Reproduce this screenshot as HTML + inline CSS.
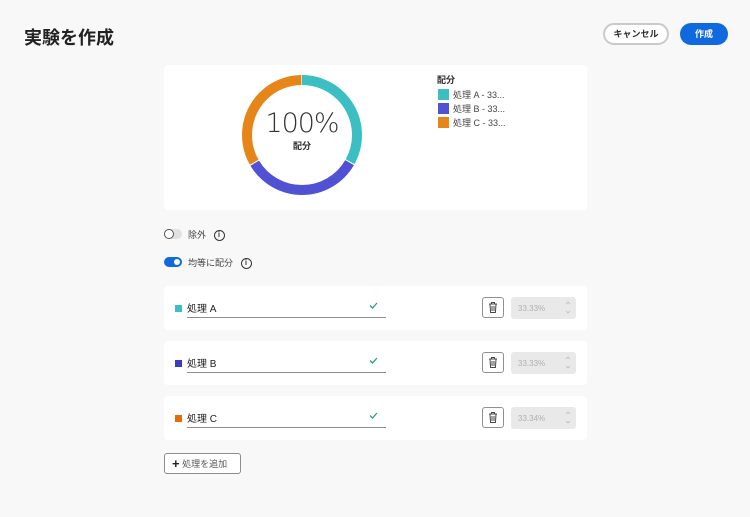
<!DOCTYPE html>
<html><head><meta charset="utf-8"><style>
*{box-sizing:border-box;margin:0;padding:0}
body{width:750px;height:517px;background:#f8f8f8;font-family:"Liberation Sans","Noto Sans CJK JP",sans-serif;color:#2c2c2c;position:relative;overflow:hidden}
.abs{position:absolute}
.card{position:absolute;left:164px;width:423px;background:#fff;border-radius:4px}
.row{height:44px}
.sq{position:absolute;left:11px;top:19px;width:7px;height:7px}
.lbl{position:absolute;left:23px;top:14px;font-size:10px;color:#222}
.line{position:absolute;left:23px;top:31px;width:199px;height:1px;background:#8e8e8e}
.chk{position:absolute;left:205px;top:16px}
.del{position:absolute;left:318px;top:11px;width:22px;height:21px;border:1px solid #909090;border-radius:3px;background:#fff}
.num{position:absolute;left:347px;top:11px;width:65px;height:22px;background:#e9e9e9;border-radius:3px;font-size:8px;color:#b0b0b0;padding:7px 0 0 7px}
.num svg{position:absolute;right:5px;top:3px}
.info{display:inline-block;width:11px;height:11px;border:1.5px solid #333;border-radius:50%;font-size:8px;text-align:center;line-height:8px;font-weight:bold;vertical-align:middle}
</style></head><body>
<div class="abs" style="left:24px;top:24px;font-size:18px;font-weight:bold;color:#222">実験を作成</div>
<div class="abs" style="left:603px;top:23px;width:66px;height:22px;border:2px solid #cacaca;border-radius:11px;font-size:9px;font-weight:bold;text-align:center;line-height:18px;background:#fff">キャンセル</div>
<div class="abs" style="left:680px;top:23px;width:48px;height:22px;background:#1169e0;border-radius:11px;color:#fff;font-size:9px;font-weight:bold;text-align:center;line-height:22px">作成</div>

<div class="card" style="top:65px;height:145px">
<svg class="abs" style="left:77px;top:9px" width="122" height="122" viewBox="0 0 122 122">
<g fill="none" stroke-width="10" transform="rotate(-90 61 61)">
<circle cx="61" cy="61" r="55" stroke="#3bbfc3" stroke-dasharray="114.2 231.4"/>
<circle cx="61" cy="61" r="55" stroke="#5151d3" stroke-dasharray="0 115.2 114.2 231.4"/>
<circle cx="61" cy="61" r="55" stroke="#e68619" stroke-dasharray="0 230.4 114.2 231.4"/>
</g></svg>
<div class="abs" style="left:98px;top:43px;width:80px;text-align:center;font-size:27px;color:#333;font-family:'DejaVu Sans',sans-serif;font-weight:200;letter-spacing:-1px">100%</div>
<div class="abs" style="left:98px;top:74px;width:80px;text-align:center;font-size:9px;font-weight:bold">配分</div>
<div class="abs" style="left:273px;top:8px;font-size:9px;font-weight:bold">配分</div>
<div class="abs" style="left:274px;top:23px;font-size:9px;color:#444;line-height:14px">
<div><span style="display:inline-block;width:11px;height:11px;background:#3bbfc3;vertical-align:-2px;margin-right:4px"></span>処理 A - 33...</div>
<div><span style="display:inline-block;width:11px;height:11px;background:#5151d3;vertical-align:-2px;margin-right:4px"></span>処理 B - 33...</div>
<div><span style="display:inline-block;width:11px;height:11px;background:#e68619;vertical-align:-2px;margin-right:4px"></span>処理 C - 33...</div>
</div></div>

<div class="abs" style="left:164px;top:229px;width:18px;height:10px;border-radius:5px;background:#e1e1e1"></div>
<div class="abs" style="left:164px;top:229px;width:10px;height:10px;border-radius:50%;border:1.5px solid #555;background:#fff"></div>
<div class="abs" style="left:188px;top:228px;font-size:9px;color:#444">除外 <span class="info" style="margin-left:5px">i</span></div>
<div class="abs" style="left:164px;top:257px;width:18px;height:10px;border-radius:5px;background:#1169e0"></div>
<div class="abs" style="left:174px;top:259px;width:6px;height:6px;border-radius:50%;background:#fff"></div>
<div class="abs" style="left:188px;top:256px;font-size:9px;color:#444">均等に配分 <span class="info" style="margin-left:5px">i</span></div>

<div class="card row" style="top:286px"><div class="sq" style="background:#3bbfc3"></div><div class="lbl">処理 A</div><svg class="chk" width="9" height="7" viewBox="0 0 9 7"><path d="M1 3.5l2.5 2.5L8 1" fill="none" stroke="#2d9d78" stroke-width="1.3"/></svg><div class="line"></div><div class="del"><svg width="20" height="19" viewBox="0 0 20 19"><path d="M6 6h8M8.5 6V4.5h3V6M7 6.5l.6 8h4.8l.6-8M9 8v5M11 8v5" fill="none" stroke="#444" stroke-width="1"/></svg></div><div class="num">33.33%<svg width="6" height="15" viewBox="0 0 6 15"><path d="M1 4l2-2 2 2M1 11l2 2 2-2" fill="none" stroke="#bbb" stroke-width=".8"/></svg></div></div>
<div class="card row" style="top:341px"><div class="sq" style="background:#3b3bc4"></div><div class="lbl">処理 B</div><svg class="chk" width="9" height="7" viewBox="0 0 9 7"><path d="M1 3.5l2.5 2.5L8 1" fill="none" stroke="#2d9d78" stroke-width="1.3"/></svg><div class="line"></div><div class="del"><svg width="20" height="19" viewBox="0 0 20 19"><path d="M6 6h8M8.5 6V4.5h3V6M7 6.5l.6 8h4.8l.6-8M9 8v5M11 8v5" fill="none" stroke="#444" stroke-width="1"/></svg></div><div class="num">33.33%<svg width="6" height="15" viewBox="0 0 6 15"><path d="M1 4l2-2 2 2M1 11l2 2 2-2" fill="none" stroke="#bbb" stroke-width=".8"/></svg></div></div>
<div class="card row" style="top:396px"><div class="sq" style="background:#e56c0c"></div><div class="lbl">処理 C</div><svg class="chk" width="9" height="7" viewBox="0 0 9 7"><path d="M1 3.5l2.5 2.5L8 1" fill="none" stroke="#2d9d78" stroke-width="1.3"/></svg><div class="line"></div><div class="del"><svg width="20" height="19" viewBox="0 0 20 19"><path d="M6 6h8M8.5 6V4.5h3V6M7 6.5l.6 8h4.8l.6-8M9 8v5M11 8v5" fill="none" stroke="#444" stroke-width="1"/></svg></div><div class="num">33.34%<svg width="6" height="15" viewBox="0 0 6 15"><path d="M1 4l2-2 2 2M1 11l2 2 2-2" fill="none" stroke="#bbb" stroke-width=".8"/></svg></div></div>

<div class="abs" style="left:164px;top:453px;width:77px;height:21px;border:1px solid #8e8e8e;border-radius:3px;background:#fff;font-size:9px;color:#555;line-height:19px;padding-left:7px"><b style="font-size:13px;color:#222;vertical-align:-1px">+</b> 処理を追加</div>
</body></html>
